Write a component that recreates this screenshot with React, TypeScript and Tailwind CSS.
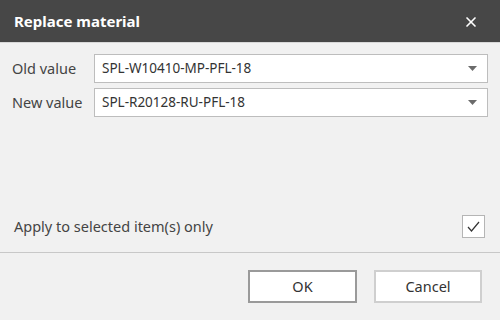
import { X } from "lucide-react";

const font = { fontFamily: '"Noto Sans", "Open Sans", sans-serif' };

function Select({ value }: { value: string }) {
  return (
    <div className="flex h-[29px] flex-1 items-center justify-between border border-[#bdbdbd] bg-white pl-[7px] pr-[10px] text-[13.5px] text-[#333]">
      <span>{value}</span>
      <svg width="9" height="5" viewBox="0 0 9 5">
        <path d="M0 0h9L4.5 5z" fill="#6b6b6b" />
      </svg>
    </div>
  );
}

export default function App() {
  return (
    <div className="flex h-[320px] w-[500px] flex-col bg-[#f1f1f1]" style={font}>
      <div className="flex h-[43px] items-center justify-between border-b border-[#d8d8d8] bg-[#474747] pl-[14px] pr-[21px] pt-[1px]">
        <span className="text-[15px] font-bold text-white">Replace material</span>
        <X className="h-[16px] w-[16px] text-white" strokeWidth={2.5} />
      </div>

      <div className="flex flex-col gap-[5px] pl-[12px] pr-[12px] pt-[11px]">
        <div className="flex items-center">
          <span className="w-[82px] text-[14.5px] text-[#444]">Old value</span>
          <Select value="SPL-W10410-MP-PFL-18" />
        </div>
        <div className="flex items-center">
          <span className="w-[82px] text-[14.5px] text-[#444]">New value</span>
          <Select value="SPL-R20128-RU-PFL-18" />
        </div>
      </div>

      <div className="mt-auto flex items-center justify-between pl-[14px] pr-[15px] pb-[14px]">
        <span className="text-[14.5px] text-[#444]">Apply to selected item(s) only</span>
        <div className="flex h-[23px] w-[23px] items-center justify-center border border-[#b5b5b5] bg-white">
          <svg width="13" height="11" viewBox="0 0 13 11">
            <path d="M1 6l3.5 4L12 1" fill="none" stroke="#333" strokeWidth="1.2" />
          </svg>
        </div>
      </div>

      <div className="flex h-[68px] items-center justify-end gap-[17px] border-t border-[#c8c8c8] pr-[18px]">
        <button className="h-[33px] w-[109px] border-2 border-[#9a9a9a] bg-white text-[14.5px] text-[#333]">
          OK
        </button>
        <button className="h-[33px] w-[108px] border-2 border-[#cfcfcf] bg-white text-[14.5px] text-[#333]">
          Cancel
        </button>
      </div>
    </div>
  );
}
